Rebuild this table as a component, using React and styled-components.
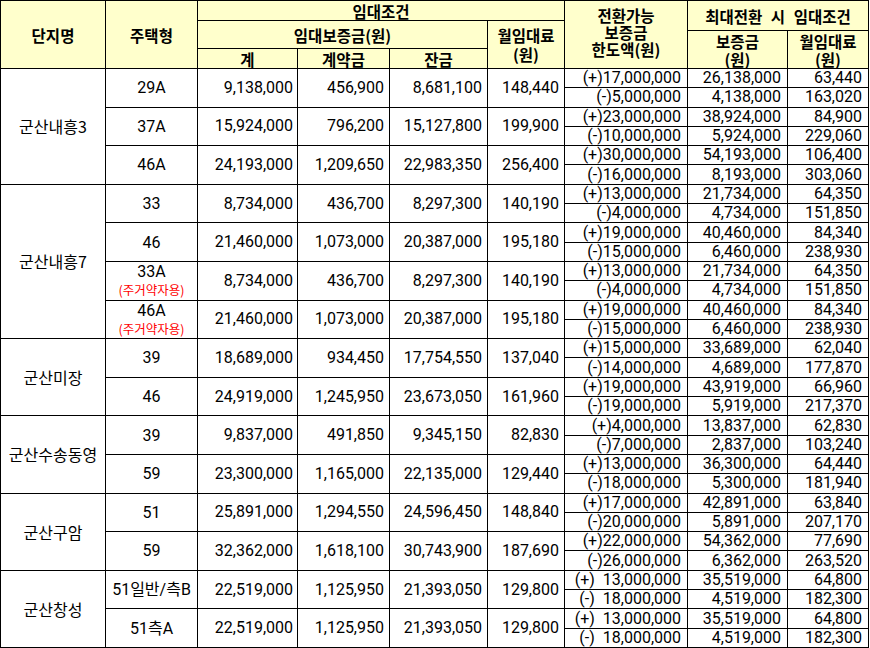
import React from "react";
import styled, { createGlobalStyle } from "styled-components";

const GlobalStyle = createGlobalStyle`
  html, body { margin: 0; padding: 0; background: #ffffff; }
  body { font-family: Roboto, "Noto Sans CJK KR", sans-serif; color: #000; }
`;

const Sheet = styled.div`
  display: grid;
  grid-template-columns: 104px 91px 99px 91px 97px 76px 122px 99px 80px;
  grid-template-rows: 19px 9px 17px 19px repeat(30, 1fr);
  gap: 1px;
  padding: 1px;
  width: 869px;
  height: 648px;
  box-sizing: border-box;
  background: #000;
  font-family: Roboto, "Noto Sans CJK KR", sans-serif;
`;

const HeadCell = styled.div`
  grid-column: span ${(p) => p.$cs || 1};
  grid-row: span ${(p) => p.$rs || 1};
  background: #ffffcc;
  display: flex;
  flex-direction: column;
  align-items: center;
  justify-content: center;
  text-align: center;
  font-family: "Noto Sans CJK KR", sans-serif;
  font-weight: 700;
  font-size: 15.5px;
  line-height: ${(p) => p.$lh || 18}px;
  white-space: pre;
  overflow: visible;
  word-spacing: ${(p) => p.$ws || 0}px;
  padding-bottom: ${(p) => p.$pb || 0}px;
`;

const Cell = styled.div`
  grid-column: span 1;
  grid-row: span ${(p) => p.$rs || 1};
  background: #ffffff;
  display: flex;
  flex-direction: column;
  align-items: ${(p) => (p.$align === "right" ? "flex-end" : "center")};
  justify-content: center;
  padding: 0 ${(p) => (p.$align === "right" ? p.$pr || 5 : 0)}px 0 0;
  font-family: ${(p) =>
    p.$korean ? '"Noto Sans CJK KR", sans-serif' : 'Roboto, "Noto Sans CJK KR", sans-serif'};
  font-size: 16px;
  line-height: 18px;
  white-space: pre;
  overflow: visible;
`;

const TypeName = styled.span`
  font-size: 16px;
  line-height: 19px;
`;

const Note = styled.span`
  font-family: "Noto Sans CJK KR", sans-serif;
  font-size: 12.5px;
  line-height: 18px;
  color: #ff0000;
`;

const groups = [
  {
    name: "군산내흥3",
    types: [
      { t: "29A", v: ["9,138,000", "456,900", "8,681,100", "148,440"], c: [["(+)17,000,000", "26,138,000", "63,440"], ["(-)5,000,000", "4,138,000", "163,020"]] },
      { t: "37A", v: ["15,924,000", "796,200", "15,127,800", "199,900"], c: [["(+)23,000,000", "38,924,000", "84,900"], ["(-)10,000,000", "5,924,000", "229,060"]] },
      { t: "46A", v: ["24,193,000", "1,209,650", "22,983,350", "256,400"], c: [["(+)30,000,000", "54,193,000", "106,400"], ["(-)16,000,000", "8,193,000", "303,060"]] },
    ],
  },
  {
    name: "군산내흥7",
    types: [
      { t: "33", v: ["8,734,000", "436,700", "8,297,300", "140,190"], c: [["(+)13,000,000", "21,734,000", "64,350"], ["(-)4,000,000", "4,734,000", "151,850"]] },
      { t: "46", v: ["21,460,000", "1,073,000", "20,387,000", "195,180"], c: [["(+)19,000,000", "40,460,000", "84,340"], ["(-)15,000,000", "6,460,000", "238,930"]] },
      { t: "33A", note: "(주거약자용)", v: ["8,734,000", "436,700", "8,297,300", "140,190"], c: [["(+)13,000,000", "21,734,000", "64,350"], ["(-)4,000,000", "4,734,000", "151,850"]] },
      { t: "46A", note: "(주거약자용)", v: ["21,460,000", "1,073,000", "20,387,000", "195,180"], c: [["(+)19,000,000", "40,460,000", "84,340"], ["(-)15,000,000", "6,460,000", "238,930"]] },
    ],
  },
  {
    name: "군산미장",
    types: [
      { t: "39", v: ["18,689,000", "934,450", "17,754,550", "137,040"], c: [["(+)15,000,000", "33,689,000", "62,040"], ["(-)14,000,000", "4,689,000", "177,870"]] },
      { t: "46", v: ["24,919,000", "1,245,950", "23,673,050", "161,960"], c: [["(+)19,000,000", "43,919,000", "66,960"], ["(-)19,000,000", "5,919,000", "217,370"]] },
    ],
  },
  {
    name: "군산수송동영",
    types: [
      { t: "39", v: ["9,837,000", "491,850", "9,345,150", "82,830"], c: [["(+)4,000,000", "13,837,000", "62,830"], ["(-)7,000,000", "2,837,000", "103,240"]] },
      { t: "59", v: ["23,300,000", "1,165,000", "22,135,000", "129,440"], c: [["(+)13,000,000", "36,300,000", "64,440"], ["(-)18,000,000", "5,300,000", "181,940"]] },
    ],
  },
  {
    name: "군산구암",
    types: [
      { t: "51", v: ["25,891,000", "1,294,550", "24,596,450", "148,840"], c: [["(+)17,000,000", "42,891,000", "63,840"], ["(-)20,000,000", "5,891,000", "207,170"]] },
      { t: "59", v: ["32,362,000", "1,618,100", "30,743,900", "187,690"], c: [["(+)22,000,000", "54,362,000", "77,690"], ["(-)26,000,000", "6,362,000", "263,520"]] },
    ],
  },
  {
    name: "군산창성",
    types: [
      { t: "51일반/측B", v: ["22,519,000", "1,125,950", "21,393,050", "129,800"], c: [["(+)  13,000,000", "35,519,000", "64,800"], ["(-)  18,000,000", "4,519,000", "182,300"]] },
      { t: "51측A", v: ["22,519,000", "1,125,950", "21,393,050", "129,800"], c: [["(+)  13,000,000", "35,519,000", "64,800"], ["(-)  18,000,000", "4,519,000", "182,300"]] },
    ],
  },
];

function TypeRows({ type }) {
  return (
    <>
      <Cell $rs={2}>
        <TypeName>{type.t}</TypeName>
        {type.note && <Note>{type.note}</Note>}
      </Cell>
      {type.v.map((val, i) => (
        <Cell key={"v" + i} $rs={2} $align="right" $pr={i === 0 ? 4 : 5}>
          {val}
        </Cell>
      ))}
      {type.c.map((row, ri) =>
        row.map((val, ci) => (
          <Cell key={"c" + ri + ci} $align="right" $pr={6}>
            {val}
          </Cell>
        ))
      )}
    </>
  );
}

export default function App() {
  return (
    <>
      <GlobalStyle />
      <Sheet>
        <HeadCell $rs={4}>단지명</HeadCell>
        <HeadCell $rs={4}>주택형</HeadCell>
        <HeadCell $cs={4}>임대조건</HeadCell>
        <HeadCell $rs={4} $lh={17} $pb={4}>
          <span>전환가능</span>
          <span>보증금</span>
          <span>한도액(원)</span>
        </HeadCell>
        <HeadCell $cs={2} $rs={2} $ws={5}>최대전환 시 임대조건</HeadCell>
        <HeadCell $cs={3} $rs={2}>임대보증금(원)</HeadCell>
        <HeadCell $rs={3} $lh={19}>
          <span>월임대료</span>
          <span>(원)</span>
        </HeadCell>
        <HeadCell $rs={2}>
          <span>보증금</span>
          <span>(원)</span>
        </HeadCell>
        <HeadCell $rs={2}>
          <span>월임대료</span>
          <span>(원)</span>
        </HeadCell>
        <HeadCell>계</HeadCell>
        <HeadCell>계약금</HeadCell>
        <HeadCell>잔금</HeadCell>
        {groups.map((g) => (
          <React.Fragment key={g.name}>
            <Cell $rs={g.types.length * 2} $korean>
              {g.name}
            </Cell>
            {g.types.map((type, i) => (
              <TypeRows key={i} type={type} />
            ))}
          </React.Fragment>
        ))}
      </Sheet>
    </>
  );
}
